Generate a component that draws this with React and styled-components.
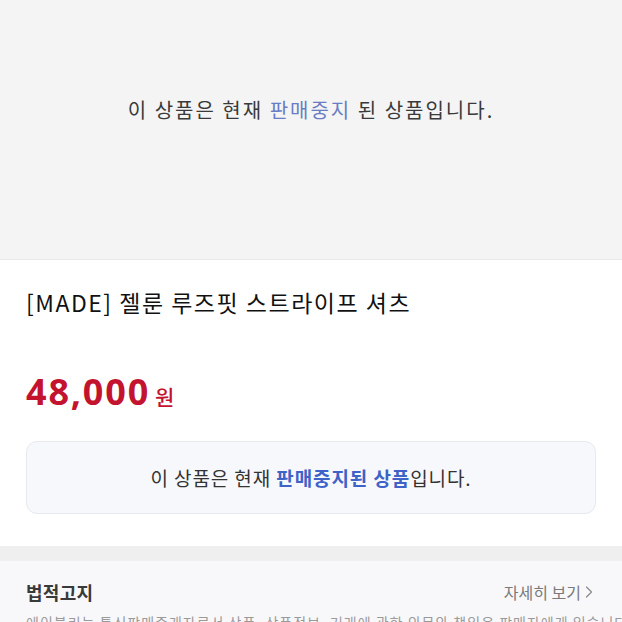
import React from 'react'
import styled, { createGlobalStyle } from 'styled-components'

const GlobalStyle = createGlobalStyle`
    html, body {
        margin: 0;
        padding: 0;
        background: #ffffff;
        overflow: hidden;
    }
    body {
        font-family: "Noto Sans CJK KR", "Noto Sans", sans-serif;
        -webkit-font-smoothing: antialiased;
    }
`

function App() {
    return (
        <Page>
            <GlobalStyle />
            <SoldOutBanner>
                <BannerText>
                    이 상품은 현재 <BannerHighlight>판매중지</BannerHighlight> 된 상품입니다.
                </BannerText>
            </SoldOutBanner>
            <InfoSection>
                <Title>[MADE] 젤룬 루즈핏 스트라이프 셔츠</Title>
                <PriceRow>
                    <Price>48,000</Price>
                    <Won>원</Won>
                </PriceRow>
                <NoticeBox>
                    <NoticeText>
                        이 상품은 현재 <NoticeStrong>판매중지된 상품</NoticeStrong>입니다.
                    </NoticeText>
                </NoticeBox>
            </InfoSection>
            <Divider />
            <LegalSection>
                <LegalHeader>
                    <LegalTitle>법적고지</LegalTitle>
                    <MoreLink>
                        자세히 보기
                        <svg width="10" height="14" viewBox="0 0 10 14" fill="none">
                            <path d="M2.5 2 L7.5 7 L2.5 12" stroke="#8a8a8a" strokeWidth="1.2" strokeLinecap="round" strokeLinejoin="round" />
                        </svg>
                    </MoreLink>
                </LegalHeader>
                <LegalText>
                    에이블리는 통신판매중개자로서 상품, 상품정보, 거래에 관한 의무와 책임은 판매자에게 있습니다.
                </LegalText>
            </LegalSection>
        </Page>
    )
}

export default App

const Page = styled.div`
    width: 622px;
    height: 622px;
    overflow: hidden;
    display: flex;
    flex-direction: column;
`

const SoldOutBanner = styled.div`
    height: 260px;
    flex-shrink: 0;
    background: #f4f4f4;
    border-bottom: 1px solid #e8e8e8;
    display: flex;
    align-items: flex-start;
    justify-content: center;
    padding-top: 95px;
    box-sizing: border-box;
`

const BannerText = styled.p`
    margin: 0;
    font-size: 20px;
    line-height: 30px;
    color: #3a3a3a;
    letter-spacing: 2px;
`

const BannerHighlight = styled.span`
    color: #6a7cc4;
`

const InfoSection = styled.div`
    background: #ffffff;
    padding: 26px 26px 32px;
    display: flex;
    flex-direction: column;
`

const Title = styled.h1`
    margin: 0;
    font-size: 23px;
    line-height: 32px;
    font-weight: 400;
    color: #111111;
    letter-spacing: 1.5px;
`

const PriceRow = styled.div`
    display: flex;
    align-items: baseline;
    gap: 5px;
    margin-top: 52px;
    height: 44px;
`

const Price = styled.span`
    font-size: 36px;
    line-height: 44px;
    font-weight: 700;
    color: #c3132f;
    letter-spacing: 1.8px;
    font-family: "Noto Sans", "Noto Sans CJK KR", sans-serif;
`

const Won = styled.span`
    font-size: 21px;
    font-weight: 500;
    color: #c3132f;
`

const NoticeBox = styled.div`
    margin-top: 27px;
    height: 73px;
    box-sizing: border-box;
    border: 1px solid #e7e9ee;
    border-radius: 11px;
    background: #f7f8fb;
    display: flex;
    align-items: center;
    justify-content: center;
`

const NoticeText = styled.p`
    margin: 0;
    font-size: 19px;
    line-height: 28px;
    color: #333333;
    letter-spacing: 0.9px;
`

const NoticeStrong = styled.span`
    color: #3d62c8;
    font-weight: 700;
`

const Divider = styled.div`
    height: 15px;
    flex-shrink: 0;
    background: #efefef;
`

const LegalSection = styled.div`
    flex: 1;
    background: #f8f8fa;
    padding: 19px 26px 0;
`

const LegalHeader = styled.div`
    display: flex;
    align-items: center;
    justify-content: space-between;
`

const LegalTitle = styled.h2`
    margin: 0;
    font-size: 18px;
    line-height: 24px;
    font-weight: 700;
    color: #3a3a3a;
    letter-spacing: 0.3px;
`

const MoreLink = styled.span`
    display: flex;
    align-items: center;
    gap: 3px;
    font-size: 16px;
    color: #7a7a7a;
    margin-right: 2px;
`

const LegalText = styled.p`
    margin: 7px 0 0;
    font-size: 14px;
    line-height: 22px;
    color: #9a9a9a;
    letter-spacing: 1px;
    white-space: nowrap;
`
